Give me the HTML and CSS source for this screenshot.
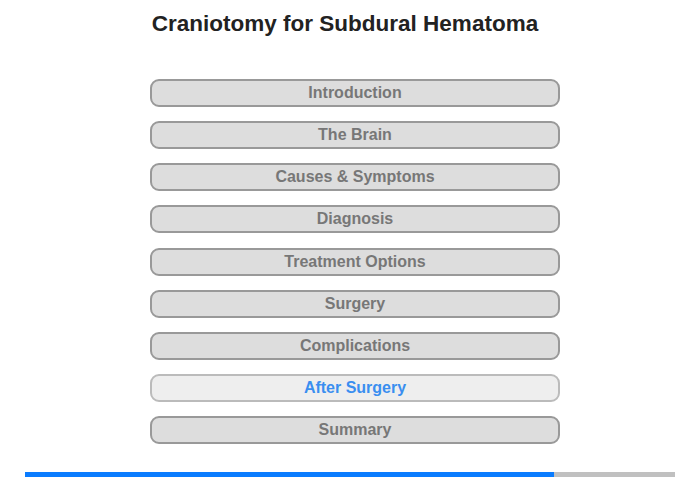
FILE: index.html
```html
<!DOCTYPE html>
<html>
<head>
<meta charset="utf-8">
<link rel="stylesheet" href="styles.css">
</head>
<body>
<div class="page">
  <h1 class="title">Craniotomy for Subdural Hematoma</h1>
  <nav class="menu">
    <div class="item">Introduction</div>
    <div class="item">The Brain</div>
    <div class="item">Causes &amp; Symptoms</div>
    <div class="item">Diagnosis</div>
    <div class="item">Treatment Options</div>
    <div class="item">Surgery</div>
    <div class="item">Complications</div>
    <div class="item active">After Surgery</div>
    <div class="item">Summary</div>
  </nav>
  <div class="progress"><div class="fill" style="width:81.4%"></div></div>
</div>
</body>
</html>
```
FILE: styles.css
```css
html, body { margin: 0; padding: 0; background: #fff; }
body { font-family: "Liberation Sans", Arial, sans-serif; }
.page { width: 700px; height: 480px; display: flex; flex-direction: column; }
.title {
  margin: 11px 0 0 0;
  padding-right: 10px;
  font-size: 22.5px;
  line-height: 26px;
  font-weight: bold;
  color: #222;
  text-align: center;
}
.menu {
  margin: 42px 0 0 150px;
  width: 410px;
  display: flex;
  flex-direction: column;
  gap: 14.125px;
}
.item {
  box-sizing: border-box;
  height: 28px;
  border: 2px solid #999;
  border-radius: 9px;
  background: #ddd;
  color: #777;
  font-size: 16px;
  font-weight: bold;
  line-height: 24px;
  text-align: center;
}
.item.active {
  border-color: #bbb;
  background: #eee;
  color: #3a8ef0;
}
.progress {
  margin: 28px 0 0 25px;
  width: 650px;
  height: 5px;
  background: #c0c0c0;
}
.fill { height: 100%; background: #0a7cff; }
```
